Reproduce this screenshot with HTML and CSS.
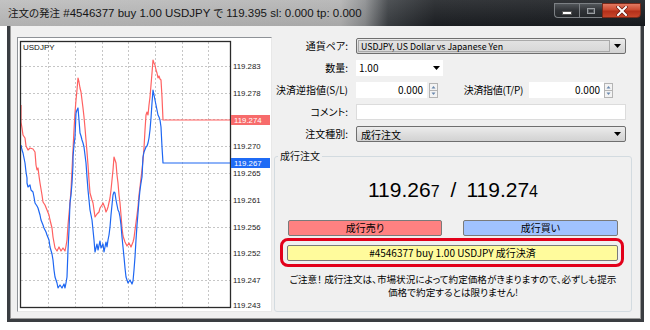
FILE: index.html
```html
<!DOCTYPE html>
<html lang="ja">
<head>
<meta charset="utf-8">
<title>注文の発注</title>
<link rel="stylesheet" href="styles.css">
</head>
<body>
<div class="window">
  <div class="titlebar">
    <div class="title"><span class="ja">注文の発注</span> #4546377 buy 1.00 USDJPY <span class="ja">で</span> 119.395 sl: 0.000 tp: 0.000</div>
    <div class="caption">
      <div class="cbtn min"><svg width="10" height="4" viewBox="0 0 10 4"><rect x="0.5" y="0.5" width="9" height="3" fill="#fff" stroke="#555"/></svg></div>
      <div class="cbtn max"><svg width="10" height="8" viewBox="0 0 10 8"><rect x="1.5" y="1.5" width="7" height="5" fill="none" stroke="#9a9ea2"/><rect x="2.5" y="2.5" width="5" height="3" fill="none" stroke="#55595d"/></svg></div>
      <div class="cbtn close"><svg width="12" height="10" viewBox="0 0 12 10"><path d="M2 1L10 9M10 1L2 9" stroke="#6a1a10" stroke-width="3.4" stroke-linecap="square"/><path d="M2 1L10 9M10 1L2 9" stroke="#fff" stroke-width="2" stroke-linecap="square"/></svg></div>
    </div>
  </div>
  <div class="client">
    <div class="chart">
      <svg width="253" height="273" viewBox="18 38 253 273">
        <rect x="18" y="38" width="253" height="273" fill="#fff"/>
        <path class="grid" d="M48.5 42V307M75.5 42V307M102.5 42V307M128.5 42V307M155.5 42V307M182.5 42V307M208.5 42V307M21 66.5H230M21 93.5H230M21 119.5H230M21 146.5H230M21 173.5H230M21 200.5H230M21 227.5H230M21 253.5H230M21 280.5H230"/>
        <polyline class="ask" points="21,105 21,122 22,128 23,135 25,138 26,146 28,150 30,148 33,149 35,152 36,165 37,170 38,168 39,176 40,183 42,195 43,202 45,205 47,210 49,215 50,220 52,228 53,237 55,248 57,251 59,247 61,251 63,248 65,251 66,246 67,240 68,225 70,203 71,190 72,170 73,150 74,130 75,113 76,100 77,90 78,78 79,82 80,88 81,92 82,100 83,108 84,117 85,128 86,140 87,152 88,165 89,180 90,193 92,200 93,203 94,210 95,217 97,214 99,212 100,208 102,205 103,203 105,208 106,212 107,210 108,207 110,198 111,190 112,180 113,170 114,157 115,160 116,163 117,175 118,183 119,195 120,203 121,215 122,228 123,236 125,242 127,246 129,243 131,247 133,242 134,238 135,230 137,215 138,207 139,195 140,187 141,178 142,170 143,160 144,148 145,130 146,115 147,112 148,115 149,105 150,97 151,85 152,73 153,60 154,63 155,65 156,70 157,73 158,78 159,76 160,79 161,80 162,97 163,120 230,120"/>
        <polyline class="bid" points="21,145 22,150 23,153 24,158 25,163 26,172 27,178 27,183 28,187 30,185 31,190 33,192 34,197 35,203 37,206 38,208 40,215 41,220 43,225 44,228 46,232 47,235 49,240 50,247 52,254 53,260 54,270 55,277 57,283 58,288 60,285 62,288 64,284 65,288 66,283 67,277 68,250 69,230 70,203 71,195 72,183 73,165 73,157 74,145 75,137 76,113 77,110 78,108 79,120 80,133 81,136 82,140 83,143 84,147 85,155 86,163 87,177 88,190 89,200 90,210 92,220 93,230 94,240 95,252 97,244 98,250 100,241 101,248 103,244 104,252 106,242 107,247 108,240 109,235 110,227 111,215 112,205 113,195 114,192 115,193 116,200 117,205 118,210 119,212 120,217 121,225 122,237 123,247 124,257 125,268 126,277 128,283 130,280 132,284 133,281 134,270 135,257 136,240 137,225 138,213 139,200 140,190 141,183 142,177 143,157 144,152 146,147 147,146 148,143 149,138 150,130 151,118 152,103 153,90 154,95 155,100 156,105 157,110 158,115 159,117 160,120 161,127 162,147 163,163 230,163"/>
        <rect class="frame" x="20.5" y="41.5" width="210" height="266"/>
        <text class="sym" x="23" y="50">USDJPY</text>
        <g class="axis">
          <text x="233" y="69">119.283</text>
          <text x="233" y="96">119.278</text>
          <text x="233" y="149">119.270</text>
          <text x="233" y="176">119.265</text>
          <text x="233" y="203">119.261</text>
          <text x="233" y="230">119.256</text>
          <text x="233" y="256">119.252</text>
          <text x="233" y="283">119.247</text>
          <text x="233" y="308">119.243</text>
        </g>
        <rect x="231" y="115" width="39" height="10" fill="#f76b6b"/>
        <text class="tag" x="234" y="123">119.274</text>
        <rect x="231" y="158" width="39" height="10" fill="#1f6bf5"/>
        <text class="tag" x="234" y="166">119.267</text>
      </svg>
    </div>
    <div class="panel">
      <div class="form">
        <label class="lbl">通貨ペア:</label>
        <div class="combo"><span class="val">USDJPY, US Dollar vs Japanese Yen</span><span class="drop"><svg width="7" height="4" viewBox="0 0 7 4"><path d="M0 0H7L3.5 4Z"/></svg></span></div>

        <label class="lbl">数量:</label>
        <div class="row"><div class="dd"><span class="val">1.00</span><svg width="7" height="4" viewBox="0 0 7 4"><path d="M0 0H7L3.5 4Z"/></svg></div></div>

        <label class="lbl">決済逆指値(S/L)</label>
        <div class="row">
          <div class="num sl">0.000</div>
          <svg class="spin" width="9" height="15" viewBox="0 0 9 15"><rect x="0.5" y="0.5" width="8" height="14" fill="#f3f3f3" stroke="#b4b4b4"/><path d="M1 7.5H8" stroke="#b4b4b4"/><path d="M2.5 5.5L4.5 3L6.5 5.5Z" fill="#6a88ad"/><path d="M2.5 9.5L4.5 12L6.5 9.5Z" fill="#6a88ad"/></svg>
          <span class="lbl2">決済指値(T/P)</span>
          <div class="num tp">0.000</div>
          <svg class="spin" width="9" height="15" viewBox="0 0 9 15"><rect x="0.5" y="0.5" width="8" height="14" fill="#f3f3f3" stroke="#b4b4b4"/><path d="M1 7.5H8" stroke="#b4b4b4"/><path d="M2.5 5.5L4.5 3L6.5 5.5Z" fill="#6a88ad"/><path d="M2.5 9.5L4.5 12L6.5 9.5Z" fill="#6a88ad"/></svg>
        </div>

        <label class="lbl">コメント:</label>
        <div class="text"></div>

        <label class="lbl">注文種別:</label>
        <div class="combo light"><span class="val">成行注文</span><span class="drop"><svg width="7" height="4" viewBox="0 0 7 4"><path d="M0 0H7L3.5 4Z"/></svg></span></div>
      </div>

      <fieldset class="group">
        <legend>成行注文</legend>
        <div class="quote">119.26<small>7</small><span class="sep">/</span>119.27<small>4</small></div>
        <div class="trade">
          <button class="btn sell">成行売り</button>
          <button class="btn buy">成行買い</button>
        </div>
        <div class="highlight">
          <button class="btn closepos">#4546377 buy 1.00 USDJPY 成行決済</button>
        </div>
        <p class="notice">ご注意！ 成行注文は、市場状況によって約定価格がきまりますので、必ずしも提示<br>価格で約定するとは限りません!</p>
      </fieldset>
    </div>
  </div>
</div>
</body>
</html>
```

FILE: styles.css
```css
* { box-sizing: border-box; }
html, body { margin: 0; padding: 0; background: #fff; }
body {
  width: 650px;
  height: 330px;
  overflow: hidden;
  font-family: "Noto Sans CJK JP", "Liberation Sans", sans-serif;
  font-size: 10px;
  color: #000;
  font-feature-settings: "palt";
}

.window { width: 645px; }

/* title bar */
.titlebar {
  height: 26px;
  display: flex;
  justify-content: space-between;
  align-items: flex-start;
  background:
    linear-gradient(180deg, rgba(255,255,255,0.10), rgba(0,0,0,0.06)),
    linear-gradient(90deg, #bcbcbc 0, #b2b2b2 340px, #8a8c8e 365px, #3b3f43 388px, #1d2024 435px, #181b1f 100%);
}
.title {
  padding-left: 8px;
  line-height: 26px;
  font-family: "Liberation Sans", "Noto Sans CJK JP", sans-serif;
  font-size: 11.5px;
  color: #151515;
  white-space: nowrap;
}
.title .ja { font-family: "Noto Sans CJK JP", sans-serif; font-size: 10.5px; }
.caption { display: flex; margin-top: 3px; margin-right: 4px; }
.cbtn {
  height: 15px;
  display: flex;
  align-items: center;
  justify-content: center;
  border: 1px solid #7c8084;
}
.cbtn.min {
  width: 25px;
  border-radius: 0 0 0 4px;
  border-right: 0;
  background: linear-gradient(#52565a, #303337 50%, #25282b);
}
.cbtn.min svg { margin-top: 5px; }
.cbtn.max {
  width: 23px;
  border-right: 0;
  background: linear-gradient(#52565a, #303337 50%, #25282b);
}
.cbtn.close {
  width: 39px;
  border-radius: 0 0 4px 0;
  border-color: #7a2a1a;
  background: linear-gradient(#e27a62, #cb4a30 45%, #b5301a 55%, #c8452a);
}

/* client area */
.client {
  margin-left: 7px;
  width: 637px;
  height: 296px;
  background: #f0f0f0;
  border: 3px solid #3a3d41;
  border-top: 0;
  box-shadow: inset 1px 0 #9a9a9a, inset -1px 0 #9a9a9a, inset 0 -1px #9a9a9a;
  display: flex;
  gap: 2px;
  padding: 11px 9px 0 7px;
}

.chart {
  width: 255px;
  height: 275px;
  border: 1px solid #8e9297;
  border-right-color: #e8e8e8;
  border-bottom-color: #e8e8e8;
  flex: none;
}
.chart svg { display: block; }
.grid { stroke: #c6c6c6; stroke-width: 1; stroke-dasharray: 2 2; fill: none; shape-rendering: crispEdges; }
.frame { fill: none; stroke: #2b2b2b; stroke-width: 1.3; }
.ask { fill: none; stroke: #ff6161; stroke-width: 1.2; stroke-linejoin: round; }
.bid { fill: none; stroke: #1d66f2; stroke-width: 1.2; stroke-linejoin: round; }
.sym { font-family: "Liberation Sans", sans-serif; font-size: 8px; fill: #111; }
.axis text { font-family: "Liberation Sans", sans-serif; font-size: 7.8px; fill: #1a1a1a; }
.tag { font-family: "Liberation Sans", sans-serif; font-size: 7.8px; fill: #fff; }

/* right panel */
.panel { width: 358px; display: flex; flex-direction: column; }
.form {
  margin-top: 1px;
  margin-left: 1px;
  display: grid;
  grid-template-columns: 73px 270px;
  grid-auto-rows: 16px;
  column-gap: 8px;
  row-gap: 6px;
}
.lbl { text-align: right; line-height: 16px; white-space: nowrap; }
.combo {
  display: flex;
  border: 1px solid #6f6f6f;
  border-radius: 2px;
  background: linear-gradient(#ececec, #dedede 50%, #d2d2d2);
}
.combo .val {
  flex: 1;
  margin: 1px 0 1px 1px;
  padding-left: 2px;
  line-height: 12px;
  font-size: 8.8px;
  background: linear-gradient(#e2e2e2, #d8d8d8);
  border: 1px solid #a9a9a9;
  white-space: nowrap;
}
.combo.light .val { background: transparent; border-color: transparent; font-size: 10px; }
.combo .drop { width: 15px; display: flex; align-items: center; justify-content: center; }
.row { display: flex; align-items: center; }
.dd {
  width: 87px;
  height: 16px;
  background: #fff;
  display: flex;
  align-items: center;
  justify-content: space-between;
  padding: 0 3px;
}
.val { line-height: 14px; }
.num {
  height: 16px;
  background: #fff;
  text-align: right;
  line-height: 16px;
  padding-right: 4px;
}
.num.sl { width: 71px; }
.num.tp { width: 75px; }
.spin { flex: none; margin-left: 2px; }
.num.tp + .spin { margin-left: 0; }
.lbl2 { width: 91px; text-align: right; padding-right: 6px; white-space: nowrap; line-height: 16px; letter-spacing: -0.3px; }
.text { background: #fff; border: 1px solid #dcdcdc; }

/* group */
.group {
  margin: 8px 0 0 0;
  border: 1px solid #d3dbe0;
  border-radius: 3px;
  padding: 16px 13px 12px;
  min-width: 0;
}
.group legend {
  padding: 0 2px;
  margin-left: -10px;
  line-height: 12px;
  color: #111;
}
.quote {
  text-align: center;
  font-family: "Liberation Sans", sans-serif;
  font-size: 21px;
  line-height: 24px;
  color: #000;
  font-feature-settings: normal;
}
.quote small { font-size: 16px; }
.quote .sep { margin: 0 10px 0 11px; }
.trade { display: flex; justify-content: space-between; margin-top: 16px; }
.btn {
  height: 16px;
  border: 1px solid #7a7a7a;
  border-radius: 2px;
  font: inherit;
  font-size: 10px;
  line-height: 14px;
  padding: 0;
  color: #000;
}
.sell { width: 154px; background: #ff8181; }
.buy { width: 155px; background: #a0c2ff; }
.highlight {
  margin: 2px -6px 0 -8px;
  border: 3px solid #e2001a;
  border-radius: 8px;
  padding: 4px 3px 3px 4px;
}
.closepos { display: block; width: 100%; background: #fffb9c; }
.notice {
  margin: 6px -10px 0;
  text-align: center;
  font-size: 9.6px;
  line-height: 13px;
  white-space: nowrap;
}
```
